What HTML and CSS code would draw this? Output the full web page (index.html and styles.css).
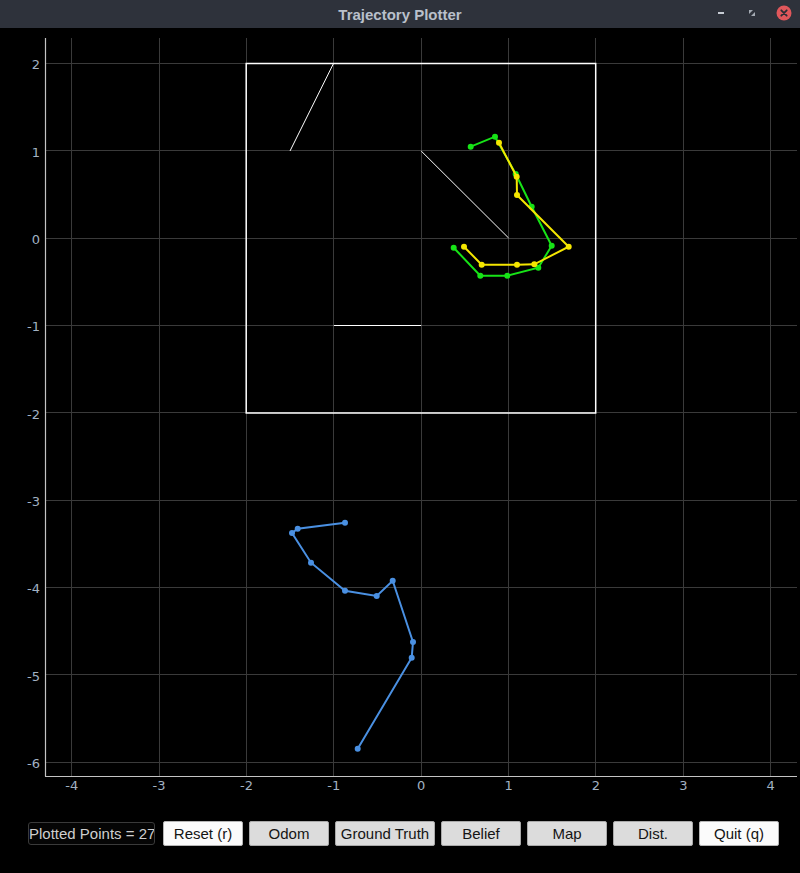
FILE: index.html
```html
<!DOCTYPE html>
<html>
<head>
<meta charset="utf-8">
<title>Trajectory Plotter</title>
<link rel="stylesheet" href="styles.css">
</head>
<body>
<div class="window">
  <header class="titlebar">
    <span class="title">Trajectory Plotter</span>
    <div class="controls">
      <svg class="ctl" width="14" height="14" viewBox="0 0 14 14"><rect x="4" y="6" width="6" height="2" fill="#c7ccd4"/></svg>
      <svg class="ctl" width="14" height="14" viewBox="0 0 14 14"><path d="M4 4h4l-4 4z M10 10h-4l4-4z" fill="#a5abb4"/></svg>
      <svg class="ctl close" width="16" height="16" viewBox="0 0 16 16"><circle cx="8" cy="8" r="7.5" fill="#e0575b"/><path d="M5.3 5.3l5.4 5.4M10.7 5.3l-5.4 5.4" stroke="#2b2e35" stroke-width="1.8" stroke-linecap="round"/></svg>
    </div>
  </header>
  <svg class="plot" width="800" height="772" viewBox="0 28 800 772">
    <g class="grid" stroke="#3a3a3a" stroke-width="1">
      <line x1="71.5" y1="38" x2="71.5" y2="776"/>
      <line x1="159.5" y1="38" x2="159.5" y2="776"/>
      <line x1="246.5" y1="38" x2="246.5" y2="776"/>
      <line x1="333.5" y1="38" x2="333.5" y2="776"/>
      <line x1="421.5" y1="38" x2="421.5" y2="776"/>
      <line x1="508.5" y1="38" x2="508.5" y2="776"/>
      <line x1="595.5" y1="38" x2="595.5" y2="776"/>
      <line x1="683.5" y1="38" x2="683.5" y2="776"/>
      <line x1="770.5" y1="38" x2="770.5" y2="776"/>
      <line x1="45" y1="63.5" x2="797" y2="63.5"/>
      <line x1="45" y1="150.5" x2="797" y2="150.5"/>
      <line x1="45" y1="238.5" x2="797" y2="238.5"/>
      <line x1="45" y1="325.5" x2="797" y2="325.5"/>
      <line x1="45" y1="412.5" x2="797" y2="412.5"/>
      <line x1="45" y1="500.5" x2="797" y2="500.5"/>
      <line x1="45" y1="587.5" x2="797" y2="587.5"/>
      <line x1="45" y1="674.5" x2="797" y2="674.5"/>
      <line x1="45" y1="762.5" x2="797" y2="762.5"/>
    </g>
    <g class="axes" stroke="#c4c4c4" stroke-width="1.2">
      <line x1="45.5" y1="38" x2="45.5" y2="776.5"/>
      <line x1="45" y1="776.5" x2="797" y2="776.5"/>
    </g>
    <g class="ylabels">
      <text x="40" y="69">2</text>
      <text x="40" y="156.5">1</text>
      <text x="40" y="244">0</text>
      <text x="40" y="331">-1</text>
      <text x="40" y="418.5">-2</text>
      <text x="40" y="506">-3</text>
      <text x="40" y="593">-4</text>
      <text x="40" y="680.5">-5</text>
      <text x="40" y="768">-6</text>
    </g>
    <g class="xlabels">
      <text x="71.7" y="790">-4</text>
      <text x="159.1" y="790">-3</text>
      <text x="246.5" y="790">-2</text>
      <text x="333.8" y="790">-1</text>
      <text x="421.2" y="790">0</text>
      <text x="508.6" y="790">1</text>
      <text x="596" y="790">2</text>
      <text x="683.3" y="790">3</text>
      <text x="770.7" y="790">4</text>
    </g>
    <g class="map" stroke="#ffffff" fill="none">
      <rect x="246.2" y="63.5" width="349.5" height="349.5" stroke-width="1.5"/>
      <line x1="333.5" y1="63.5" x2="290" y2="151" stroke-width="1"/>
      <line x1="421.2" y1="151" x2="508.6" y2="238" stroke-width="1"/>
      <line x1="333.8" y1="325.5" x2="421.2" y2="325.5" stroke-width="1.2"/>
    </g>
    <g class="traj">
      <polyline fill="none" stroke="#17e317" stroke-width="2" points="470.7,146.7 495,136.7 515.7,174 531.7,206.7 551.7,245.7 538.3,267.7 507.3,275.7 480.3,275.7 453.7,247.7"/>
      <g fill="#17e317">
        <circle cx="470.7" cy="146.7" r="3"/><circle cx="495" cy="136.7" r="3"/><circle cx="515.7" cy="174" r="3"/><circle cx="531.7" cy="206.7" r="3"/><circle cx="551.7" cy="245.7" r="3"/><circle cx="538.3" cy="267.7" r="3"/><circle cx="507.3" cy="275.7" r="3"/><circle cx="480.3" cy="275.7" r="3"/><circle cx="453.7" cy="247.7" r="3"/>
      </g>
      <polyline fill="none" stroke="#f5e600" stroke-width="2" points="499,142.7 516.7,176.7 517,195 568.7,246.7 534.3,264.3 517,264.7 481.7,264.7 464,246.7"/>
      <g fill="#f5e600">
        <circle cx="499" cy="142.7" r="3"/><circle cx="516.7" cy="176.7" r="3"/><circle cx="517" cy="195" r="3"/><circle cx="568.7" cy="246.7" r="3"/><circle cx="534.3" cy="264.3" r="3"/><circle cx="517" cy="264.7" r="3"/><circle cx="481.7" cy="264.7" r="3"/><circle cx="464" cy="246.7" r="3"/>
      </g>
      <polyline fill="none" stroke="#4a90e2" stroke-width="2" points="345,522.7 297.7,528.7 292,533 311,562.7 345,590.7 376.7,596 392.7,580.7 413,642 411.7,657.7 357.7,748.7"/>
      <g fill="#4a90e2">
        <circle cx="345" cy="522.7" r="3"/><circle cx="297.7" cy="528.7" r="3"/><circle cx="292" cy="533" r="3"/><circle cx="311" cy="562.7" r="3"/><circle cx="345" cy="590.7" r="3"/><circle cx="376.7" cy="596" r="3"/><circle cx="392.7" cy="580.7" r="3"/><circle cx="413" cy="642" r="3"/><circle cx="411.7" cy="657.7" r="3"/><circle cx="357.7" cy="748.7" r="3"/>
      </g>
    </g>
  </svg>
  <div class="toolbar">
    <div class="count">Plotted Points = 27</div>
    <button class="btn light">Reset (r)</button>
    <button class="btn">Odom</button>
    <button class="btn wide">Ground Truth</button>
    <button class="btn">Belief</button>
    <button class="btn">Map</button>
    <button class="btn">Dist.</button>
    <button class="btn light">Quit (q)</button>
  </div>
</div>
</body>
</html>
```

FILE: styles.css
```css
html, body {
  margin: 0;
  padding: 0;
  background: #000;
}
.window {
  width: 800px;
  height: 873px;
  background: #000;
  overflow: hidden;
}
.titlebar {
  height: 28px;
  background: #2e323b;
  display: flex;
  align-items: center;
  justify-content: center;
  position: relative;
}
.title {
  font-family: "Liberation Sans", Arial, sans-serif;
  font-weight: bold;
  font-size: 15px;
  color: #b9c0cb;
}
.controls {
  position: absolute;
  right: 8px;
  top: 5px;
  display: flex;
  align-items: center;
  gap: 17px;
}
.ctl {
  display: block;
}
.plot {
  display: block;
}
.ylabels text {
  font-family: "DejaVu Sans", sans-serif;
  font-size: 13px;
  fill: #a2b2c3;
  text-anchor: end;
}
.xlabels text {
  font-family: "DejaVu Sans", sans-serif;
  font-size: 13px;
  fill: #a2b2c3;
  text-anchor: middle;
}
.toolbar {
  height: 67px;
  display: flex;
  align-items: center;
  padding-left: 28px;
  gap: 6px;
}
.count {
  box-sizing: border-box;
  width: 127px;
  height: 23px;
  margin-right: 2px;
  border: 1px solid #3a3a3a;
  border-radius: 3px;
  color: #cfcfcf;
  font-family: "Liberation Sans", Arial, sans-serif;
  font-size: 15px;
  line-height: 21px;
  white-space: nowrap;
  overflow: hidden;
  background: #050505;
}
.btn {
  box-sizing: border-box;
  width: 80px;
  height: 25px;
  margin: 0;
  padding: 0;
  border: 1px solid #a9a9a9;
  border-radius: 2px;
  background: #dcdcdc;
  color: #141414;
  font-family: "Liberation Sans", Arial, sans-serif;
  font-size: 15px;
  line-height: 23px;
  text-align: center;
}
.btn.light {
  background: #fbfbfb;
  border-color: #b5b5b5;
}
.btn.wide {
  width: 100px;
}
```
